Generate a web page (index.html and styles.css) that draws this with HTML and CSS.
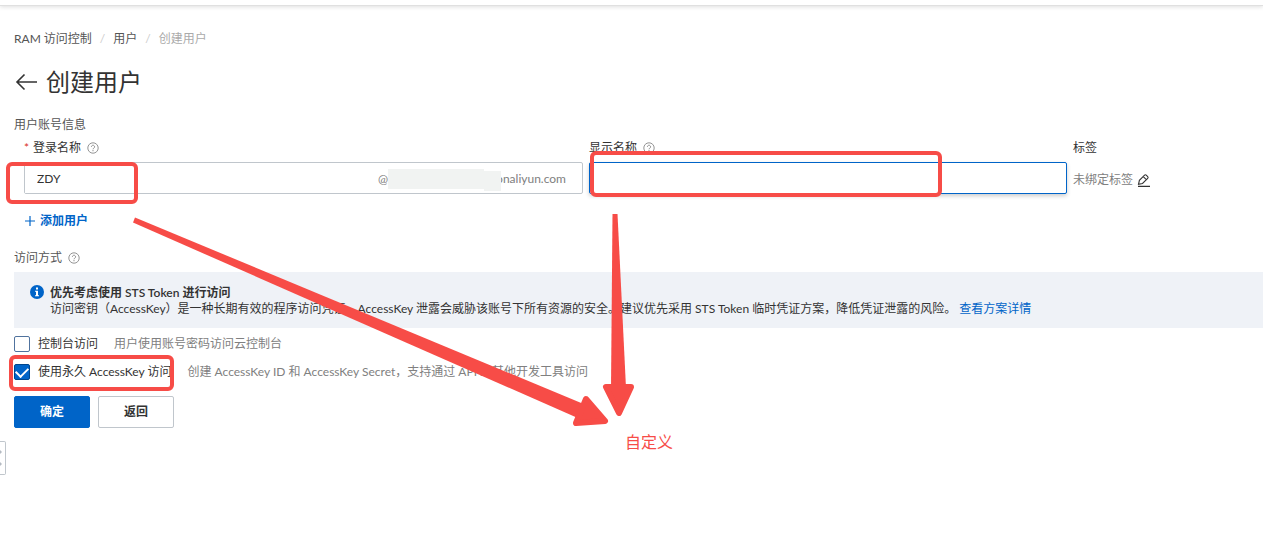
FILE: index.html
```html
<!DOCTYPE html>
<html lang="zh-CN">
<head>
    <meta charset="UTF-8">
    <meta name="viewport" content="width=device-width, initial-scale=1.0">
    <title>创建用户</title>
    <link rel="stylesheet" href="styles.css">
</head>
<body>
    <svg class="defs" width="0" height="0" aria-hidden="true">
        <symbol id="help" viewBox="0 0 12 12">
            <circle cx="6" cy="6" r="5.2" fill="none" stroke="currentColor" stroke-width="0.9"/>
            <path d="M4.4 4.8a1.6 1.6 0 1 1 2.4 1.4c-.6.3-.8.5-.8 1.1" fill="none" stroke="currentColor" stroke-width="0.9"/>
            <circle cx="6" cy="8.7" r="0.6" fill="currentColor"/>
        </symbol>
    </svg>

    <header class="topbar"></header>

    <main class="page">
        <nav class="breadcrumb">
            <a href="#">RAM 访问控制</a>
            <span class="slash">/</span>
            <a href="#">用户</a>
            <span class="slash">/</span>
            <span class="current">创建用户</span>
        </nav>

        <div class="title">
            <a href="#" class="back" aria-label="返回">
                <svg width="24" height="20" viewBox="0 0 24 20" fill="none" stroke="#333" stroke-width="1.6">
                    <path d="M23 10H3M10.500 2.500L3 10l7.500 7.500"/>
                </svg>
            </a>
            <h1>创建用户</h1>
        </div>

        <form>
            <p class="section">用户账号信息</p>
            <div class="account">
                <div class="field">
                    <div class="field-label">
                        <span class="required">*</span>
                        <label for="loginName">登录名称</label>
                        <svg class="help"><use href="#help"/></svg>
                    </div>
                    <div class="input-group">
                        <input type="text" id="loginName" value="ZDY">
                        <span class="suffix">@<span class="mask"></span><span class="mask mask-end"></span>onaliyun.com</span>
                    </div>
                </div>
                <div class="field">
                    <div class="field-label">
                        <label for="displayName">显示名称</label>
                        <svg class="help"><use href="#help"/></svg>
                    </div>
                    <input type="text" id="displayName" class="active">
                </div>
                <div class="field">
                    <div class="field-label">标签</div>
                    <div class="tags">
                        <span>未绑定标签</span>
                        <button type="button" class="edit" aria-label="编辑标签">
                            <svg width="13" height="13" viewBox="0 0 13 13" fill="none" stroke="#333" stroke-width="1.1">
                                <path d="M1.5 10.3l.9-3.9L7.6 1.200q.8-.8 1.600 0l1.500 1.500q.8.8 0 1.600L5.500 9.500zM6.300 2.600l3 3M1 12.400h12"/>
                            </svg>
                        </button>
                    </div>
                </div>
            </div>

            <button type="button" class="add">
                <svg width="10" height="10" viewBox="0 0 10 10" stroke="#0064c8" stroke-width="1.2">
                    <path d="M5 0v10M0 5h10"/>
                </svg>
                添加用户
            </button>

            <p class="section">访问方式 <svg class="help"><use href="#help"/></svg></p>
            <div class="notice">
                <svg class="info" width="14" height="14" viewBox="0 0 14 14">
                    <circle cx="7" cy="7" r="7" fill="#0064c8"/>
                    <path d="M6 2.5h2v2H6zM5 5.8h3v4.4h1v1H5v-1h1V6.8H5z" fill="#fff"/>
                </svg>
                <div>
                    <strong>优先考虑使用 STS Token 进行访问</strong>
                    <p>访问密钥（AccessKey）是一种长期有效的程序访问凭证。AccessKey 泄露会威胁该账号下所有资源的安全。建议优先采用 STS Token 临时凭证方案，降低凭证泄露的风险。 <a href="#">查看方案详情</a></p>
                </div>
            </div>

            <div class="options">
                <div class="option">
                    <input type="checkbox" id="console">
                    <label for="console">控制台访问</label>
                    <span class="hint">用户使用账号密码访问云控制台</span>
                </div>
                <div class="option">
                    <input type="checkbox" id="accessKey" checked>
                    <label for="accessKey">使用永久 AccessKey 访问</label>
                    <span class="hint">创建 AccessKey ID 和 AccessKey Secret，支持通过 API 或其他开发工具访问</span>
                </div>
            </div>

            <div class="actions">
                <button type="submit" class="btn primary">确定</button>
                <button type="button" class="btn">返回</button>
            </div>
        </form>
    </main>

    <button type="button" class="handle" aria-label="展开菜单">
        <svg width="3" height="18" viewBox="0 0 3 18" fill="#b4bac2">
            <path d="M0 1l2 2-2 2zM0 13l2 2-2 2z"/>
        </svg>
    </button>

    <!-- annotations over the form -->
    <svg class="marks" width="700" height="440" viewBox="0 0 700 440" aria-hidden="true">
        <g fill="#f74c47" stroke="#f74c47" stroke-linejoin="round">
            <path stroke="none" d="M135 217.500L586 405 580 419 133 222.500z"/>
            <path stroke-width="6" d="M586 399l19 22-29 2z"/>
            <path stroke="none" d="M612.500 214h5L626 388h-15z"/>
            <path stroke-width="6" d="M606 387h25l-12 26z"/>
        </g>
    </svg>
    <div class="box box-login"></div>
    <div class="box box-display"></div>
    <div class="box box-key"></div>
    <div class="note">自定义</div>
</body>
</html>
```
FILE: styles.css
```css
* {
    box-sizing: border-box;
}

body {
    position: relative;
    margin: 0;
    background-color: #fff;
    color: #333;
    font-family: Lato, "Noto Sans CJK SC", sans-serif;
    font-size: 12px;
    line-height: 20px;
}

h1, p {
    margin: 0;
    font-weight: normal;
}

a {
    color: #0064c8;
    text-decoration: none;
}

input, button {
    font: inherit;
    color: inherit;
}

button {
    padding: 0;
    border: none;
    background: none;
    cursor: pointer;
}

.defs {
    position: absolute;
}

.topbar {
    height: 6px;
    border-bottom: 1px solid #e0e0e0;
    box-shadow: 0 1px 4px rgba(0, 0, 0, 0.13);
}

.page {
    padding: 23px 0 0 14px;
}

.breadcrumb {
    display: flex;
    gap: 8px;
}

.breadcrumb a {
    color: #555;
}

.breadcrumb .slash {
    color: #ccc;
}

.breadcrumb .current {
    color: #aaa;
}

.title {
    display: flex;
    align-items: center;
    gap: 8px;
    margin: 15px 0 16px;
}

.title h1 {
    font-size: 24px;
    line-height: 35px;
}

.back {
    display: flex;
}

.section {
    display: flex;
    align-items: center;
    gap: 6px;
    color: #555;
}

.help {
    width: 12px;
    height: 12px;
    color: #888;
}

.account {
    display: grid;
    grid-template-columns: 559fr 478fr 190px;
    gap: 6px;
    margin: 3px 0 12px 10px;
}

.field-label {
    display: flex;
    align-items: center;
    gap: 6px;
    margin-bottom: 4px;
}

.required {
    margin-right: -2px;
    color: #d93026;
}

.input-group,
.field > input {
    display: flex;
    width: 100%;
    height: 32px;
    border: 1px solid #c0c6cc;
    border-radius: 2px;
}

.input-group input {
    flex: 1;
    min-width: 0;
    padding: 2px 12px 0;
    border: none;
    outline: none;
}

.field > .active {
    padding: 0 12px;
    border-color: #0064c8;
    outline: none;
    box-shadow: 0 2px 4px rgba(0, 0, 0, 0.2);
}

.suffix {
    display: flex;
    align-items: center;
    padding: 2px 16px 0 0;
    color: #808080;
}

.mask {
    width: 96px;
    height: 20px;
    background-color: #f1f3f2;
}

.mask-end {
    z-index: 1;
    width: 17px;
    margin: 4px -5px 0 0;
}

.tags {
    display: flex;
    align-items: center;
    gap: 4px;
    height: 36px;
    color: #808080;
}

.edit {
    display: flex;
}

.add {
    display: flex;
    align-items: center;
    gap: 5px;
    height: 22px;
    margin: 0 0 16px 11px;
    color: #0064c8;
    font-weight: bold;
}

.notice {
    display: flex;
    gap: 6px;
    margin-top: 4px;
    padding: 13px 16px 11px;
    background-color: #eff2f7;
    line-height: 16px;
}

.notice strong {
    display: block;
    font-weight: 600;
}

.info {
    flex: none;
}

.options {
    display: flex;
    flex-direction: column;
    gap: 12px;
    margin: 8px 0 16px;
}

.option {
    display: flex;
    align-items: center;
    height: 16px;
    line-height: 18px;
}

.option input {
    appearance: none;
    width: 16px;
    height: 16px;
    margin: 0 8px 0 0;
    border: 1px solid #50739e;
    border-radius: 2px;
}

.option input:checked {
    display: flex;
    align-items: center;
    justify-content: center;
    border-color: #00468c;
    background-color: #0064c8;
}

.option input:checked::before {
    content: "";
    width: 10px;
    height: 6px;
    margin-bottom: 3px;
    border: solid #fff;
    border-width: 0 0 2px 2px;
    transform: rotate(-45deg);
}

.hint {
    margin-left: 16px;
    color: #808080;
}

.actions {
    display: flex;
    gap: 8px;
}

.btn {
    width: 76px;
    height: 32px;
    border: 1px solid #c0c6cc;
    border-radius: 2px;
    font-weight: bold;
}

.btn.primary {
    border-color: #0064c8;
    background-color: #0064c8;
    color: #fff;
}

.handle {
    display: flex;
    align-items: center;
    width: 6px;
    height: 34px;
    margin-top: 13px;
    border: 1px solid #c0c6cc;
    border-left: none;
    border-radius: 0 2px 2px 0;
}

/* annotations */
.marks {
    position: absolute;
    top: 0;
    left: 0;
    pointer-events: none;
}

.box {
    position: absolute;
    border: 4px solid #f74c47;
    border-radius: 6px;
    pointer-events: none;
}

.box-login {
    top: 162px;
    left: 6px;
    width: 132px;
    height: 42px;
}

.box-display {
    top: 151px;
    left: 590px;
    width: 352px;
    height: 46px;
}

.box-key {
    top: 355px;
    left: 9px;
    width: 165px;
    height: 36px;
}

.note {
    position: absolute;
    top: 432px;
    left: 625px;
    color: #f74c47;
    font-size: 16px;
}
```
